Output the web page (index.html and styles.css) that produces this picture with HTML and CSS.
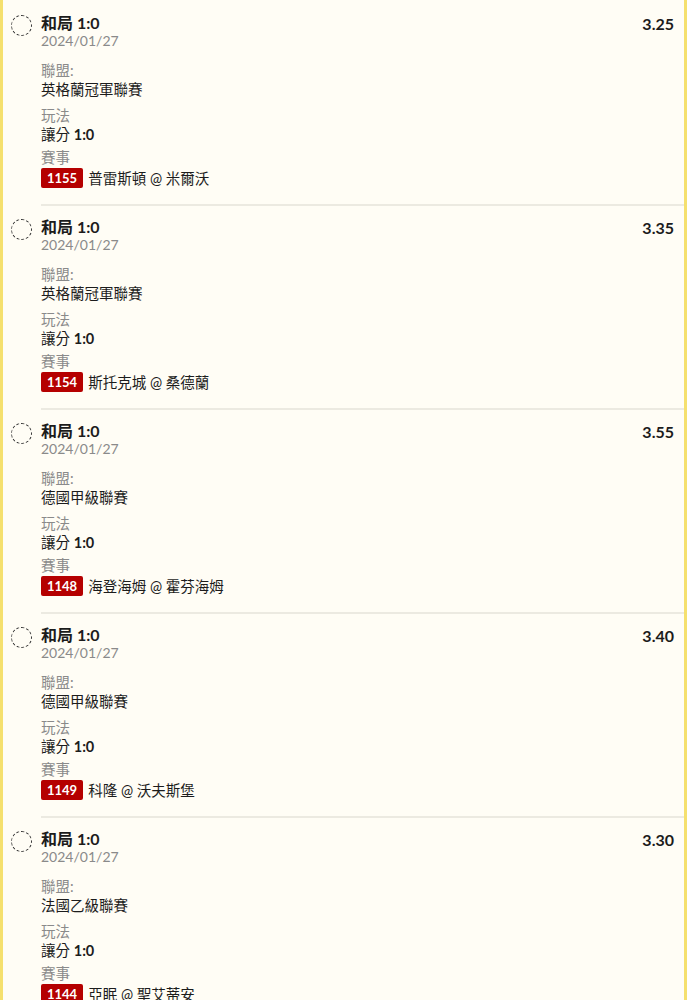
FILE: index.html
```html
<!DOCTYPE html>
<html lang="zh-Hant">
<head>
<meta charset="utf-8">
<title>投注</title>
<link rel="stylesheet" href="styles.css">
</head>
<body>
<div class="list">
  <div class="bet">
    <span class="radio"></span>
    <div class="bet-main">
      <div class="bet-head">
        <div><div class="pick">和局 1:0</div><div class="date">2024/01/27</div></div>
        <div class="odds">3.25</div>
      </div>
      <div class="group"><div class="label">聯盟:</div><div class="value">英格蘭冠軍聯賽</div></div>
      <div class="group"><div class="label">玩法</div><div class="value">讓分 <b>1:0</b></div></div>
      <div class="group last"><div class="label">賽事</div><div class="value match"><span class="badge">1155</span>普雷斯頓 @ 米爾沃</div></div>
    </div>
  </div>
  <div class="bet">
    <span class="radio"></span>
    <div class="bet-main">
      <div class="bet-head">
        <div><div class="pick">和局 1:0</div><div class="date">2024/01/27</div></div>
        <div class="odds">3.35</div>
      </div>
      <div class="group"><div class="label">聯盟:</div><div class="value">英格蘭冠軍聯賽</div></div>
      <div class="group"><div class="label">玩法</div><div class="value">讓分 <b>1:0</b></div></div>
      <div class="group last"><div class="label">賽事</div><div class="value match"><span class="badge">1154</span>斯托克城 @ 桑德蘭</div></div>
    </div>
  </div>
  <div class="bet">
    <span class="radio"></span>
    <div class="bet-main">
      <div class="bet-head">
        <div><div class="pick">和局 1:0</div><div class="date">2024/01/27</div></div>
        <div class="odds">3.55</div>
      </div>
      <div class="group"><div class="label">聯盟:</div><div class="value">德國甲級聯賽</div></div>
      <div class="group"><div class="label">玩法</div><div class="value">讓分 <b>1:0</b></div></div>
      <div class="group last"><div class="label">賽事</div><div class="value match"><span class="badge">1148</span>海登海姆 @ 霍芬海姆</div></div>
    </div>
  </div>
  <div class="bet">
    <span class="radio"></span>
    <div class="bet-main">
      <div class="bet-head">
        <div><div class="pick">和局 1:0</div><div class="date">2024/01/27</div></div>
        <div class="odds">3.40</div>
      </div>
      <div class="group"><div class="label">聯盟:</div><div class="value">德國甲級聯賽</div></div>
      <div class="group"><div class="label">玩法</div><div class="value">讓分 <b>1:0</b></div></div>
      <div class="group last"><div class="label">賽事</div><div class="value match"><span class="badge">1149</span>科隆 @ 沃夫斯堡</div></div>
    </div>
  </div>
  <div class="bet">
    <span class="radio"></span>
    <div class="bet-main">
      <div class="bet-head">
        <div><div class="pick">和局 1:0</div><div class="date">2024/01/27</div></div>
        <div class="odds">3.30</div>
      </div>
      <div class="group"><div class="label">聯盟:</div><div class="value">法國乙級聯賽</div></div>
      <div class="group"><div class="label">玩法</div><div class="value">讓分 <b>1:0</b></div></div>
      <div class="group last"><div class="label">賽事</div><div class="value match"><span class="badge">1144</span>亞眠 @ 聖艾蒂安</div></div>
    </div>
  </div>
</div>
</body>
</html>
```

FILE: styles.css
```css
html, body {
  margin: 0;
  padding: 0;
  background: #ffffff;
}
body {
  font-family: Lato, "Noto Sans CJK TC", sans-serif;
  color: #1c1c1c;
}
.list {
  margin-right: 12px;
  background: #fffdf5;
  border-left: 3px solid #f5e06e;
  border-right: 3px solid #f5e06e;
  padding-top: 2px;
  min-height: 1000px;
  box-sizing: border-box;
}
.bet {
  display: flex;
  align-items: flex-start;
  padding: 12px 0 0 8px;
}
.radio {
  flex: none;
  width: 19px;
  height: 19px;
  border: 1px dashed #333;
  border-radius: 50%;
  margin-top: 1px;
  margin-right: 9px;
}
.bet-main {
  flex: 1;
  padding: 0 10px 15px 0;
  border-bottom: 2px solid #eceae1;
}
.bet-head {
  display: flex;
  justify-content: space-between;
  align-items: flex-start;
  margin-bottom: 12px;
}
.pick {
  font-size: 16px;
  line-height: 18px;
  font-weight: 700;
}
.date {
  font-size: 14px;
  line-height: 17px;
  color: #8a8a8a;
}
.odds {
  font-size: 16px;
  line-height: 18px;
  font-weight: 700;
  padding-top: 1px;
}
.group + .group {
  margin-top: 7px;
}
.group.last {
  margin-top: 4px;
}
.label {
  font-size: 14.5px;
  line-height: 19px;
  color: #8a8a8a;
}
.value {
  font-size: 14.5px;
  line-height: 19px;
  color: #1c1c1c;
}
.value b {
  font-weight: 700;
}
.match {
  display: flex;
  align-items: center;
  height: 22px;
}
.badge {
  display: inline-block;
  background: #b50000;
  color: #fff;
  font-weight: 700;
  font-size: 13px;
  line-height: 20px;
  padding: 0 6px;
  border-radius: 2px;
  margin-right: 5px;
}
```
